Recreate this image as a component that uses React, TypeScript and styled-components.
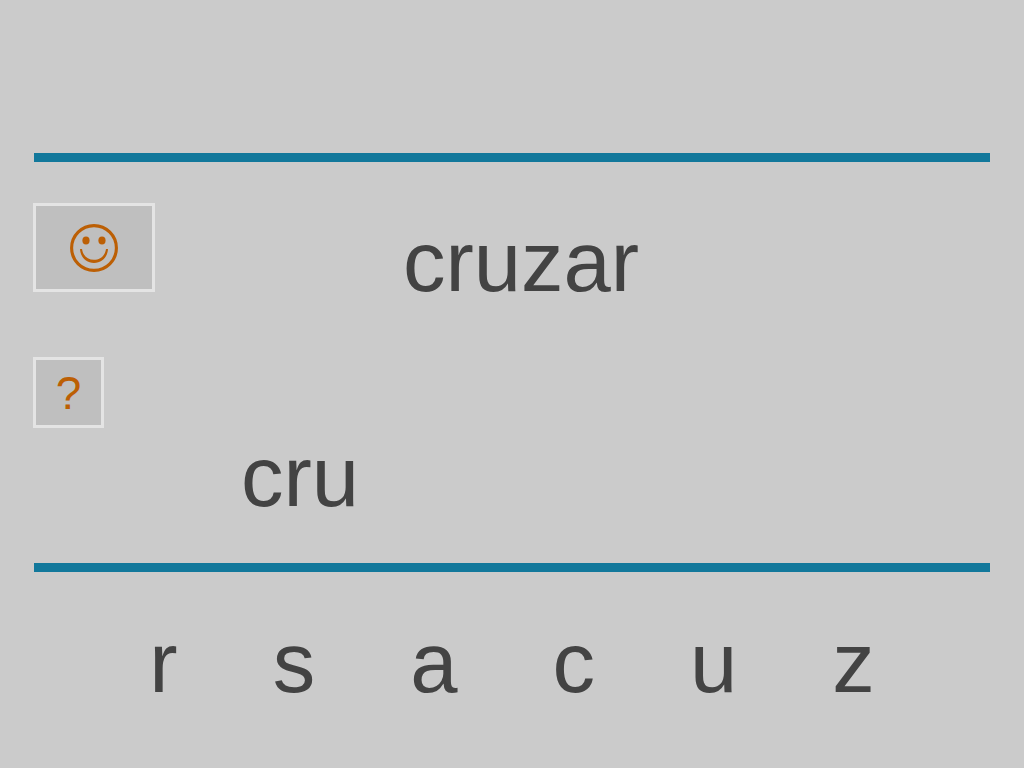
import React from "react";
import styled, { createGlobalStyle } from "styled-components";

const GlobalStyle = createGlobalStyle`
  * { box-sizing: border-box; }
  body {
    margin: 0;
    background: #cbcbcb;
    color: #434343;
    font-family: "Liberation Sans", Arial, Helvetica, sans-serif;
  }
`;

const Page = styled.main`
  display: flex;
  flex-direction: column;
  min-height: 100vh;
  padding: 153px 33px 0;
`;

const Divider = styled.hr`
  align-self: stretch;
  height: 9px;
  margin: 0 1px;
  border: 0;
  background: #12789b;
`;

const Board = styled.section`
  display: grid;
  grid-template-columns: 122px 1fr;
  grid-template-rows: 154px 206px;
  padding-top: 41px;
`;

const ToolButton = styled.button<{ $wide?: boolean }>`
  display: flex;
  align-items: center;
  justify-content: center;
  width: ${({ $wide }) => ($wide ? "122px" : "71px")};
  height: ${({ $wide }) => ($wide ? "89px" : "71px")};
  padding: 0;
  border: 3px solid #e4e4e4;
  background: #bfbfbf;
  color: #bc5f04;
  font: 46px "Liberation Sans", Arial, sans-serif;
  cursor: pointer;
`;

const Word = styled.p`
  margin: 0;
  font-size: 85px;
  line-height: 100px;
`;

const Target = styled(Word)`
  padding: 9px 0 0 248px;
`;

const Typed = styled(Word)`
  padding: 70px 0 0 86px;
`;

const Letters = styled.div`
  display: flex;
  justify-content: center;
  gap: 95px;
  padding-top: 41px;
`;

const Letter = styled.button`
  padding: 0;
  border: 0;
  background: none;
  color: inherit;
  font: 85px/100px "Liberation Sans", Arial, sans-serif;
  cursor: pointer;
`;

const SmileIcon = () => (
  <svg width="48" height="48" viewBox="0 0 48 48" aria-hidden="true">
    <circle cx="24" cy="24" r="22.4" fill="none" stroke="currentColor" strokeWidth="3.1" />
    <ellipse cx="16" cy="16.4" rx="3.6" ry="4" fill="currentColor" />
    <ellipse cx="32" cy="16.4" rx="3.6" ry="4" fill="currentColor" />
    <path
      d="M10 25C10.6 33.4 16.2 39 24 39S37.4 33.4 38 25H36C35 31.8 30.4 35.8 24 35.8S13 31.8 12 25Z"
      fill="currentColor"
    />
  </svg>
);

const letters = ["r", "s", "a", "c", "u", "z"];

export default function App() {
  return (
    <>
      <GlobalStyle />
      <Page>
        <Divider />
        <Board>
          <ToolButton type="button" $wide aria-label="Smile"><SmileIcon /></ToolButton>
          <Target>cruzar</Target>
          <ToolButton type="button">?</ToolButton>
          <Typed>cru</Typed>
        </Board>
        <Divider />
        <Letters>
          {letters.map((letter) => <Letter type="button" key={letter}>{letter}</Letter>)}
        </Letters>
      </Page>
    </>
  );
}
